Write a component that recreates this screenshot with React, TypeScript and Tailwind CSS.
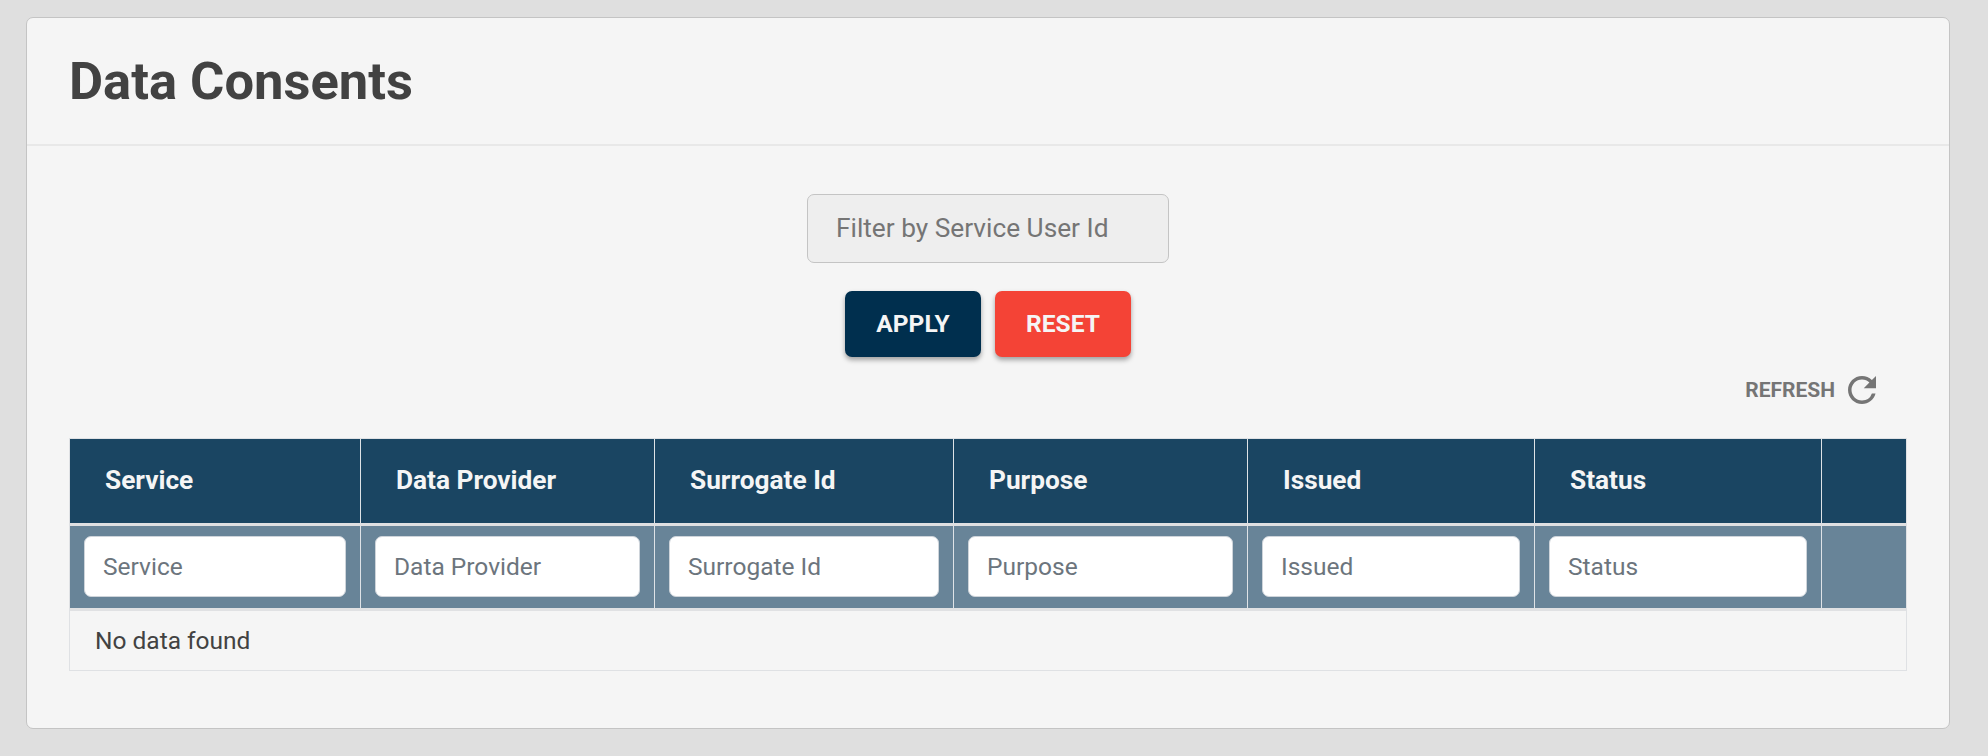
import React from "react";
import { MdRefresh } from "react-icons/md";

const columns = ["Service", "Data Provider", "Surrogate Id", "Purpose", "Issued", "Status"];

const gridColumns = "grid grid-cols-[291px_294px_299px_294px_287px_287px_84px]";

function HeaderCell({ label }: { label: string }) {
  return (
    <div className="border-r border-[#dee2e6] pl-[35px] pt-[24px] text-[26.25px] leading-[35px] font-bold text-[#f5f5f5]">
      {label}
    </div>
  );
}

function FilterCell({ label }: { label: string }) {
  return (
    <div className="border-r border-[#dee2e6] px-[14px] pt-[10px]">
      <input
        type="text"
        placeholder={label}
        className="block h-[61px] w-full rounded-[7px] border border-[#ced4da] bg-white px-[18px] text-[24.5px] text-[#495057] outline-none placeholder:text-[#6c757d] placeholder:opacity-100"
      />
    </div>
  );
}

function DataTable() {
  return (
    <div className="border border-[#dfe1e4]">
      <div className={`${gridColumns} h-[84px] bg-[#1a4562]`}>
        {columns.map((c) => (
          <HeaderCell key={c} label={c} />
        ))}
        <div />
      </div>
      <div className="h-[3px] bg-[#dfe0e2]" />
      <div className={`${gridColumns} h-[82px] bg-[#688498]`}>
        {columns.map((c) => (
          <FilterCell key={c} label={c} />
        ))}
        <div />
      </div>
      <div className="h-[3px] bg-[#e0e1e3]" />
      <div className="h-[59px] pl-[25px] pt-[13px] text-[24.5px] leading-[34px] text-[#424242]">No data found</div>
    </div>
  );
}

export default function App() {
  return (
    <div className="h-[756px] w-[1988px] bg-[#dfdfdf] pl-[26px] pt-[17px] font-[Roboto,sans-serif]">
      <section className="h-[712px] w-[1924px] rounded-[7px] border border-[#c4c4c4] bg-[#f5f5f5]">
        <header className="h-[128px] border-b-2 border-[#e8e8e8] pl-[42px] pt-[32px]">
          <h1 className="text-[52.5px] leading-[62px] font-bold text-[#424242]">Data Consents</h1>
        </header>
        <div className="flex flex-col px-[42px]">
          <div className="mt-[48px] flex justify-center">
            <input
              type="text"
              placeholder="Filter by Service User Id"
              className="h-[69px] w-[362px] rounded-[7px] border border-[#c4c4c4] bg-[#eeeeee] px-[28px] pb-[2px] text-[26.25px] outline-none placeholder:text-[#757575] placeholder:opacity-100"
            />
          </div>
          <div className="mt-[28px] flex justify-center gap-[14px]">
            <button className="h-[66px] w-[136px] rounded-[7px] bg-[#002f4e] pt-[1px] text-[24.5px] font-bold text-[#f5f5f5] shadow-[0_3px_5px_rgba(0,0,0,0.35)]">
              APPLY
            </button>
            <button className="h-[66px] w-[136px] rounded-[7px] bg-[#f44336] pt-[1px] text-[24.5px] font-bold text-[#f5f5f5] shadow-[0_3px_5px_rgba(0,0,0,0.35)]">
              RESET
            </button>
          </div>
          <div className="mt-[12px] flex h-[42px] items-center justify-end gap-[6px] pr-[24px] text-[#757575]">
            <span className="text-[21px] leading-[24px] font-bold">REFRESH</span>
            <MdRefresh className="size-[42px]" />
          </div>
          <div className="mt-[27px]">
            <DataTable />
          </div>
        </div>
      </section>
    </div>
  );
}
